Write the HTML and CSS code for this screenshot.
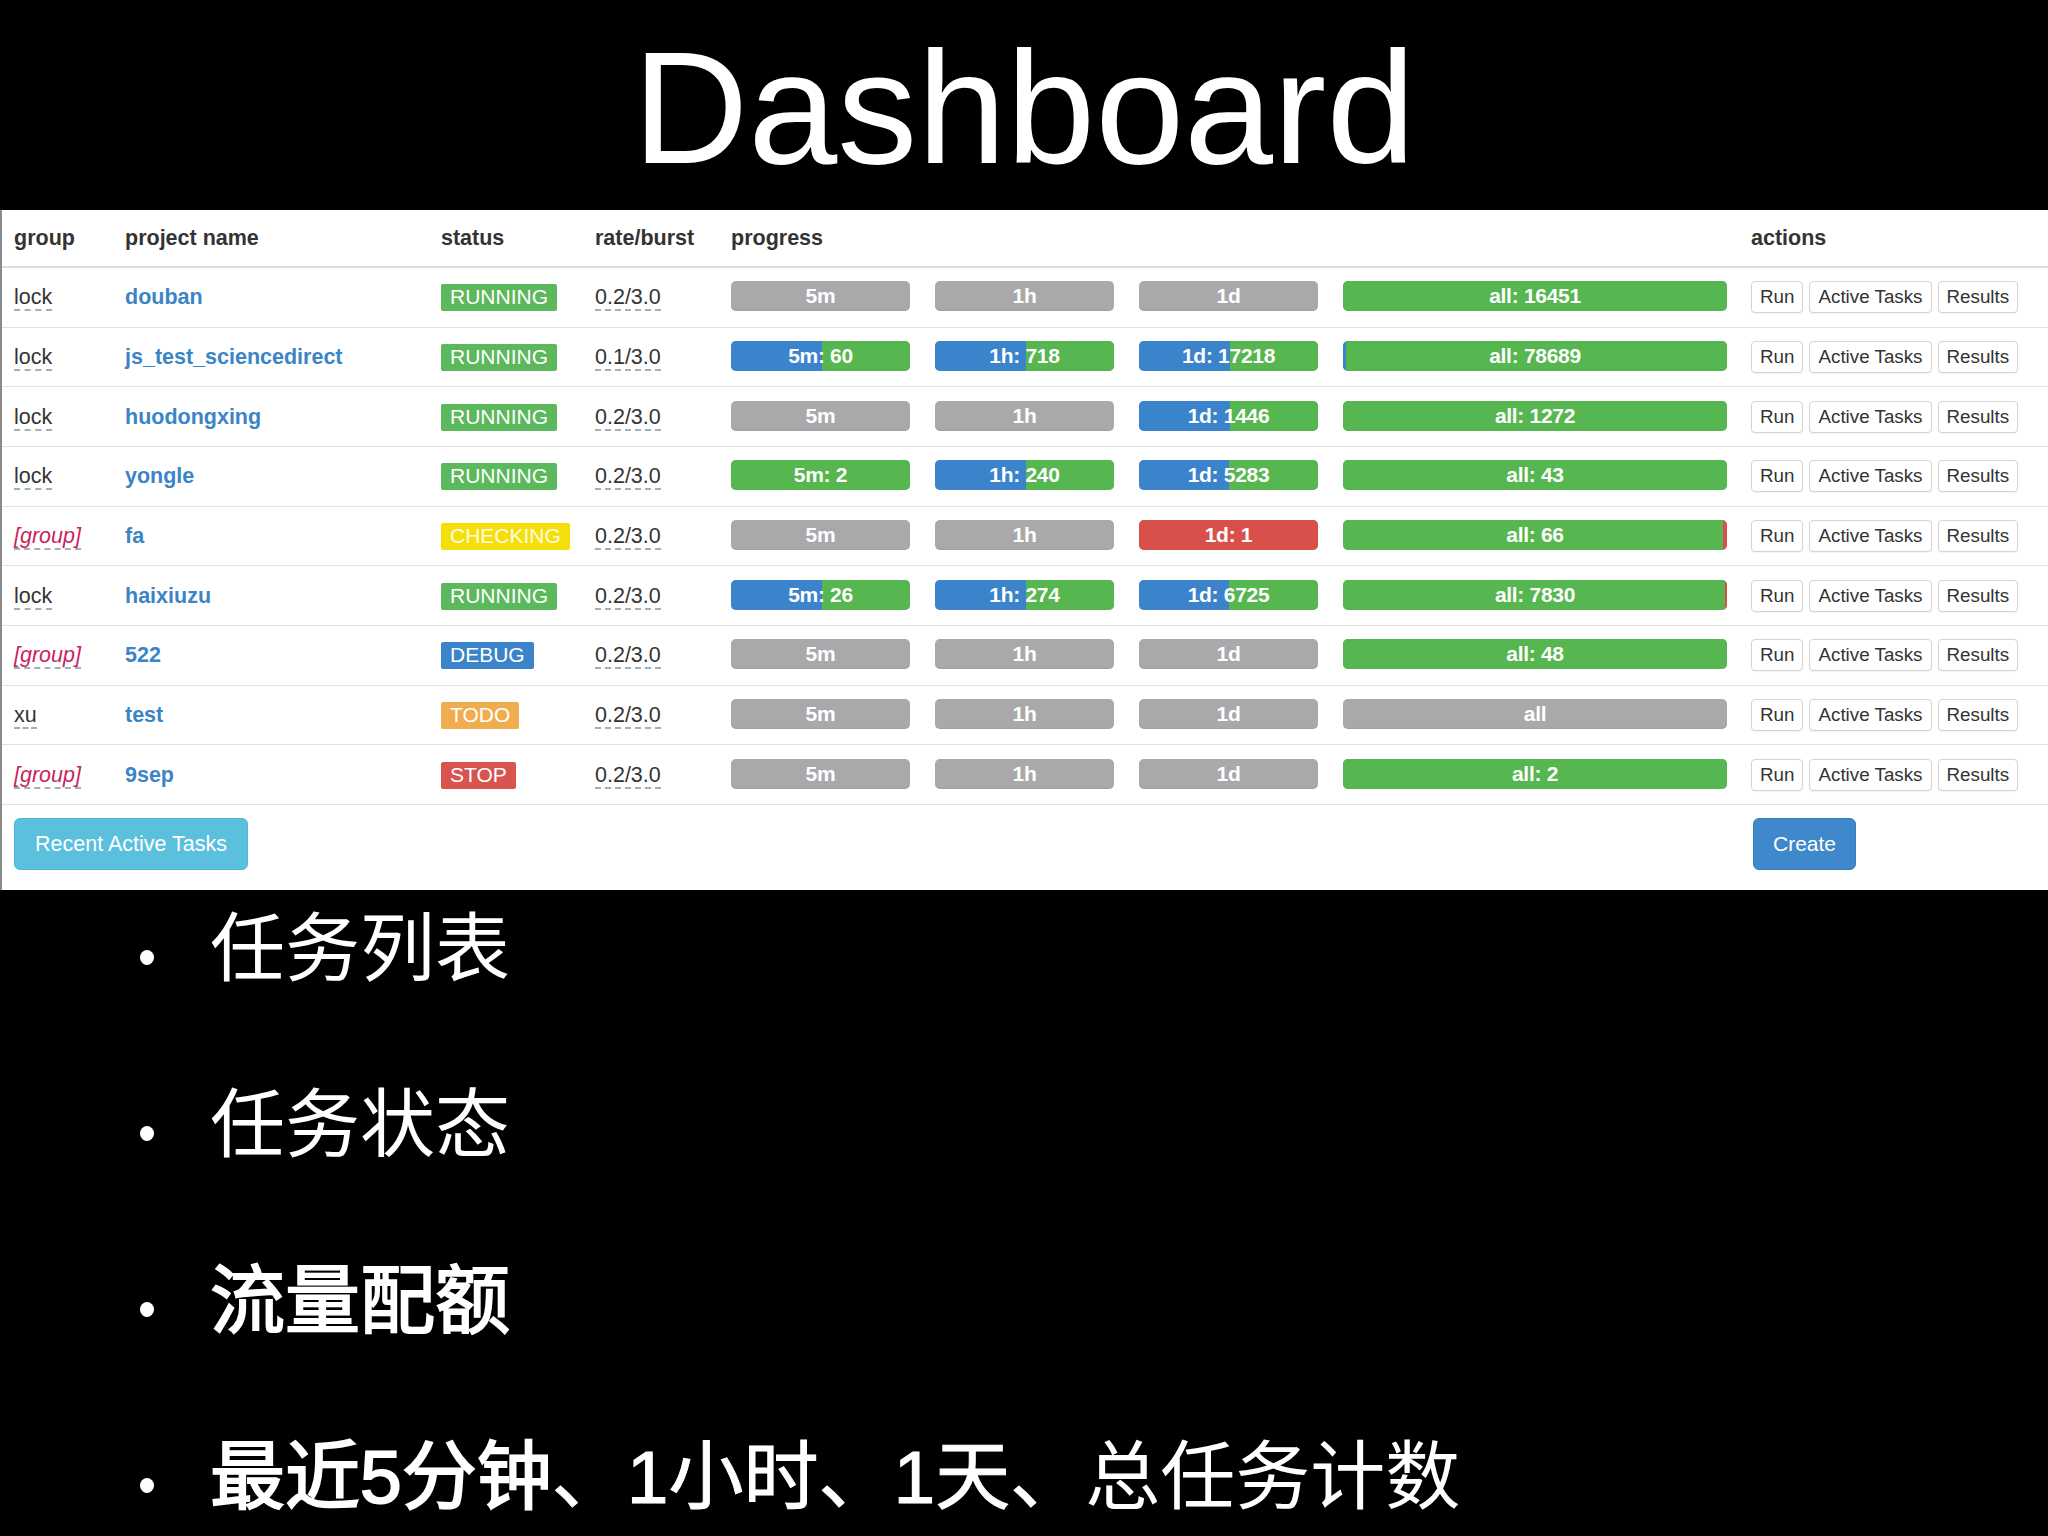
FILE: index.html
```html
<!DOCTYPE html>
<html lang="zh-CN">
<head>
<meta charset="utf-8">
<title>Dashboard</title>
<link rel="stylesheet" href="styles.css">
</head>
<body>
<h1 class="title">Dashboard</h1>

<section class="panel">
  <div class="row head">
    <div>group</div>
    <div>project name</div>
    <div>status</div>
    <div>rate/burst</div>
    <div>progress</div>
    <div>actions</div>
  </div>

  <div class="row">
    <div><span class="editable">lock</span></div>
    <div class="pname">douban</div>
    <div><span class="label running">RUNNING</span></div>
    <div><span class="editable">0.2/3.0</span></div>
    <div class="bars">
      <div class="bar"><span class="bar-text">5m</span></div>
      <div class="bar"><span class="bar-text">1h</span></div>
      <div class="bar"><span class="bar-text">1d</span></div>
      <div class="bar wide"><i class="seg green" style="width:100%"></i><span class="bar-text">all: 16451</span></div>
    </div>
    <div class="actions"><span class="btn">Run</span><span class="btn">Active Tasks</span><span class="btn">Results</span></div>
  </div>

  <div class="row">
    <div><span class="editable">lock</span></div>
    <div class="pname">js_test_sciencedirect</div>
    <div><span class="label running">RUNNING</span></div>
    <div><span class="editable">0.1/3.0</span></div>
    <div class="bars">
      <div class="bar"><i class="seg blue" style="width:51%"></i><i class="seg green" style="width:49%"></i><span class="bar-text">5m: 60</span></div>
      <div class="bar"><i class="seg blue" style="width:51%"></i><i class="seg green" style="width:49%"></i><span class="bar-text">1h: 718</span></div>
      <div class="bar"><i class="seg blue" style="width:51%"></i><i class="seg green" style="width:49%"></i><span class="bar-text">1d: 17218</span></div>
      <div class="bar wide"><i class="seg blue" style="width:0.8%"></i><i class="seg green" style="width:99.2%"></i><span class="bar-text">all: 78689</span></div>
    </div>
    <div class="actions"><span class="btn">Run</span><span class="btn">Active Tasks</span><span class="btn">Results</span></div>
  </div>

  <div class="row">
    <div><span class="editable">lock</span></div>
    <div class="pname">huodongxing</div>
    <div><span class="label running">RUNNING</span></div>
    <div><span class="editable">0.2/3.0</span></div>
    <div class="bars">
      <div class="bar"><span class="bar-text">5m</span></div>
      <div class="bar"><span class="bar-text">1h</span></div>
      <div class="bar"><i class="seg blue" style="width:51%"></i><i class="seg green" style="width:49%"></i><span class="bar-text">1d: 1446</span></div>
      <div class="bar wide"><i class="seg green" style="width:100%"></i><span class="bar-text">all: 1272</span></div>
    </div>
    <div class="actions"><span class="btn">Run</span><span class="btn">Active Tasks</span><span class="btn">Results</span></div>
  </div>

  <div class="row">
    <div><span class="editable">lock</span></div>
    <div class="pname">yongle</div>
    <div><span class="label running">RUNNING</span></div>
    <div><span class="editable">0.2/3.0</span></div>
    <div class="bars">
      <div class="bar"><i class="seg green" style="width:100%"></i><span class="bar-text">5m: 2</span></div>
      <div class="bar"><i class="seg blue" style="width:51%"></i><i class="seg green" style="width:49%"></i><span class="bar-text">1h: 240</span></div>
      <div class="bar"><i class="seg blue" style="width:50%"></i><i class="seg green" style="width:50%"></i><span class="bar-text">1d: 5283</span></div>
      <div class="bar wide"><i class="seg green" style="width:100%"></i><span class="bar-text">all: 43</span></div>
    </div>
    <div class="actions"><span class="btn">Run</span><span class="btn">Active Tasks</span><span class="btn">Results</span></div>
  </div>

  <div class="row">
    <div><span class="editable group">[group]</span></div>
    <div class="pname">fa</div>
    <div><span class="label checking">CHECKING</span></div>
    <div><span class="editable">0.2/3.0</span></div>
    <div class="bars">
      <div class="bar"><span class="bar-text">5m</span></div>
      <div class="bar"><span class="bar-text">1h</span></div>
      <div class="bar"><i class="seg red" style="width:100%"></i><span class="bar-text">1d: 1</span></div>
      <div class="bar wide"><i class="seg green" style="width:99%"></i><i class="seg red" style="width:1%"></i><span class="bar-text">all: 66</span></div>
    </div>
    <div class="actions"><span class="btn">Run</span><span class="btn">Active Tasks</span><span class="btn">Results</span></div>
  </div>

  <div class="row">
    <div><span class="editable">lock</span></div>
    <div class="pname">haixiuzu</div>
    <div><span class="label running">RUNNING</span></div>
    <div><span class="editable">0.2/3.0</span></div>
    <div class="bars">
      <div class="bar"><i class="seg blue" style="width:51%"></i><i class="seg green" style="width:49%"></i><span class="bar-text">5m: 26</span></div>
      <div class="bar"><i class="seg blue" style="width:51%"></i><i class="seg green" style="width:49%"></i><span class="bar-text">1h: 274</span></div>
      <div class="bar"><i class="seg blue" style="width:50%"></i><i class="seg green" style="width:50%"></i><span class="bar-text">1d: 6725</span></div>
      <div class="bar wide"><i class="seg green" style="width:99.6%"></i><i class="seg red" style="width:0.4%"></i><span class="bar-text">all: 7830</span></div>
    </div>
    <div class="actions"><span class="btn">Run</span><span class="btn">Active Tasks</span><span class="btn">Results</span></div>
  </div>

  <div class="row">
    <div><span class="editable group">[group]</span></div>
    <div class="pname">522</div>
    <div><span class="label debug">DEBUG</span></div>
    <div><span class="editable">0.2/3.0</span></div>
    <div class="bars">
      <div class="bar"><span class="bar-text">5m</span></div>
      <div class="bar"><span class="bar-text">1h</span></div>
      <div class="bar"><span class="bar-text">1d</span></div>
      <div class="bar wide"><i class="seg green" style="width:100%"></i><span class="bar-text">all: 48</span></div>
    </div>
    <div class="actions"><span class="btn">Run</span><span class="btn">Active Tasks</span><span class="btn">Results</span></div>
  </div>

  <div class="row">
    <div><span class="editable">xu</span></div>
    <div class="pname">test</div>
    <div><span class="label todo">TODO</span></div>
    <div><span class="editable">0.2/3.0</span></div>
    <div class="bars">
      <div class="bar"><span class="bar-text">5m</span></div>
      <div class="bar"><span class="bar-text">1h</span></div>
      <div class="bar"><span class="bar-text">1d</span></div>
      <div class="bar wide"><span class="bar-text">all</span></div>
    </div>
    <div class="actions"><span class="btn">Run</span><span class="btn">Active Tasks</span><span class="btn">Results</span></div>
  </div>

  <div class="row">
    <div><span class="editable group">[group]</span></div>
    <div class="pname">9sep</div>
    <div><span class="label stop">STOP</span></div>
    <div><span class="editable">0.2/3.0</span></div>
    <div class="bars">
      <div class="bar"><span class="bar-text">5m</span></div>
      <div class="bar"><span class="bar-text">1h</span></div>
      <div class="bar"><span class="bar-text">1d</span></div>
      <div class="bar wide"><i class="seg green" style="width:100%"></i><span class="bar-text">all: 2</span></div>
    </div>
    <div class="actions"><span class="btn">Run</span><span class="btn">Active Tasks</span><span class="btn">Results</span></div>
  </div>

  <div class="footer">
    <span class="big-btn info">Recent Active Tasks</span>
    <span class="big-btn primary">Create</span>
  </div>
</section>

<ul class="points">
  <li class="point"><span class="dot"></span><span class="point-text">任务列表</span></li>
  <li class="point"><span class="dot"></span><span class="point-text">任务状态</span></li>
  <li class="point"><span class="dot"></span><span class="point-text heavy">流量配额</span></li>
  <li class="point"><span class="dot"></span><span class="point-text"><span class="heavy">最近5分钟</span><span class="semi">、1小时、1天、</span>总任务计数</span></li>
</ul>
</body>
</html>
```

FILE: styles.css
```css
html, body {
  margin: 0;
  padding: 0;
  background: #000;
}

body {
  width: 2048px;
  height: 1536px;
  overflow: hidden;
  font-family: "Liberation Sans", Arial, "Noto Sans CJK SC", sans-serif;
}

.title {
  margin: 0;
  height: 210px;
  box-sizing: border-box;
  padding-top: 6px;
  line-height: 204px;
  font-size: 160px;
  font-weight: normal;
  color: #fff;
  text-align: center;
}

.panel {
  background: #fff;
  border-left: 2px solid #8a8a8a;
  box-sizing: border-box;
  height: 680px;
  color: #333;
  font-size: 21.5px;
}

.row {
  display: grid;
  grid-template-columns: 111px 316px 154px 136px 1020px 1fr;
  align-items: center;
  padding-left: 12px;
  height: 59.67px;
  box-sizing: border-box;
  border-bottom: 1px solid #e1e1e1;
  line-height: 30px;
}

.row.head {
  height: 58px;
  border-bottom: 2px solid #dcdcdc;
  font-weight: bold;
  color: #333;
}

.editable {
  border-bottom: 2px dashed #9fb0b6;
  line-height: 24px;
  display: inline-block;
}

.editable.group {
  color: #c9245b;
  font-style: italic;
}

.pname {
  color: #3b84c6;
  font-weight: bold;
}

.label {
  display: inline-block;
  color: #fff;
  font-size: 21px;
  line-height: 22px;
  padding: 2px 9px 3px;
  border-radius: 2px;
  margin-top: -3px;
}

.label.running { background: #5cb85c; }
.label.checking { background: #f5df0a; color: #fdfbe4; }
.label.debug { background: #3c84c9; }
.label.todo { background: #f0ad4e; }
.label.stop { background: #d9534f; }

.bars {
  display: flex;
  gap: 25px;
  margin-top: -2px;
}

.bar {
  position: relative;
  display: flex;
  width: 179px;
  height: 30px;
  border-radius: 5px;
  overflow: hidden;
  background: #a9a9ac;
  box-shadow: inset 0 -1px 1px rgba(0, 0, 0, 0.06);
}

.bar.wide {
  width: 384px;
}

.seg {
  display: block;
  height: 100%;
}

.seg.green { background: #56b64f; }
.seg.blue { background: #3b84cb; }
.seg.red { background: #d9504a; }

.bar-text {
  position: absolute;
  left: 0;
  right: 0;
  top: 0;
  line-height: 30px;
  text-align: center;
  color: #fff;
  font-weight: bold;
  font-size: 21px;
  letter-spacing: -0.3px;
}

.actions {
  display: flex;
  gap: 6px;
}

.btn {
  display: inline-block;
  border: 1px solid #d4d4d4;
  border-radius: 4px;
  background: #fff;
  color: #333;
  font-size: 18.8px;
  line-height: 28px;
  padding: 1px 8px;
  box-shadow: 0 1px 1px rgba(0, 0, 0, 0.05);
}

.footer {
  display: grid;
  grid-template-columns: 1739px auto;
  align-items: start;
  padding: 13px 0 0 12px;
}

.big-btn {
  justify-self: start;
  display: inline-block;
  height: 52px;
  box-sizing: border-box;
  line-height: 50px;
  border-radius: 6px;
  color: #fff;
  font-size: 21.5px;
}

.big-btn.info {
  background: #5bc0de;
  border: 1px solid #4cb8d8;
  padding: 0 20px;
}

.big-btn.primary {
  background: #3f88cb;
  border: 1px solid #357ebd;
  padding: 0 19px;
  font-size: 21px;
}

.points {
  list-style: none;
  margin: 0;
  padding: 9px 0 0 0;
  color: #fff;
}

.point {
  display: flex;
  align-items: center;
  height: 100px;
  margin-bottom: 76px;
}

.dot {
  width: 14px;
  height: 15px;
  border-radius: 50%;
  background: #fff;
  margin-left: 140px;
  margin-right: 56px;
  margin-top: 16px;
  flex: none;
}

.point-text {
  font-family: "Liberation Sans", "Noto Sans CJK SC", sans-serif;
  font-size: 75px;
  line-height: 100px;
  font-weight: normal;
}

.heavy {
  -webkit-text-stroke: 2px #fff;
}

.semi {
  -webkit-text-stroke: 1px #fff;
}
```
